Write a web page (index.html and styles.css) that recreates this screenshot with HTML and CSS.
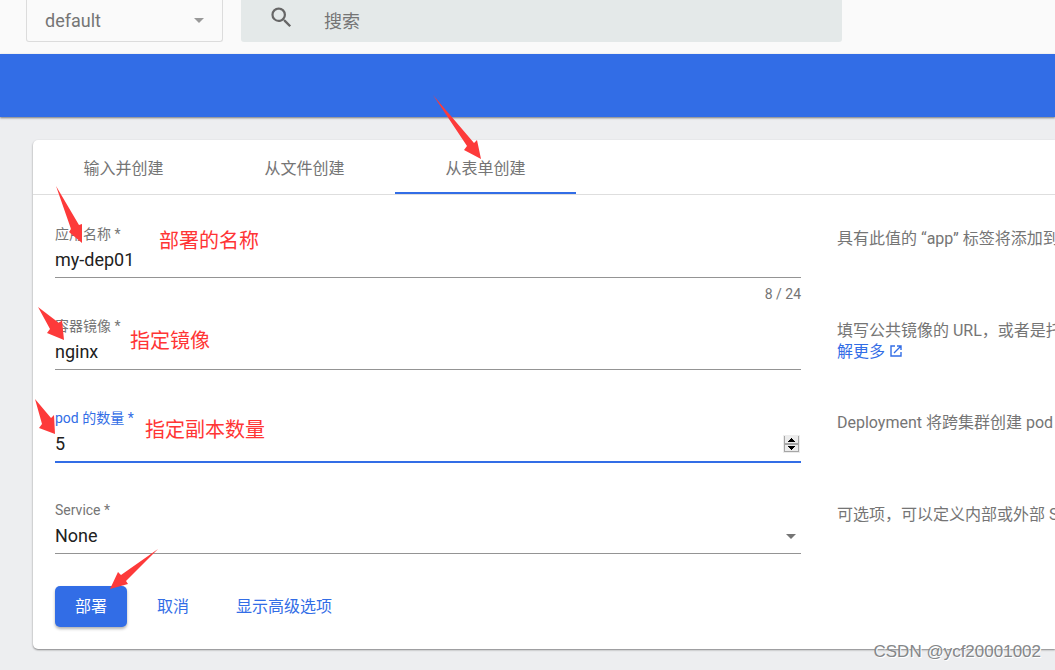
FILE: index.html
```html
<!DOCTYPE html>
<html lang="zh-CN">
<head>
<meta charset="utf-8">
<title>从表单创建</title>
<link rel="stylesheet" href="styles.css">
</head>
<body>
<header class="topbar">
  <div class="select-wrap namespace">
    <select class="namespace-select" aria-label="Namespace"><option>default</option></select>
    <svg class="caret" viewBox="0 0 10 5" aria-hidden="true"><path d="M0 0h10L5 5z"/></svg>
  </div>
  <label class="search">
    <svg class="search-icon" viewBox="0 0 24 24" aria-hidden="true"><path d="M15.5 14h-.79l-.28-.27A6.47 6.47 0 0 0 16 9.5 6.5 6.5 0 1 0 9.5 16c1.61 0 3.09-.59 4.23-1.57l.27.28v.79l5 4.99L20.49 19l-4.99-5zm-6 0C7.01 14 5 11.99 5 9.5S7.01 5 9.5 5 14 7.01 14 9.5 11.99 14 9.5 14z"/></svg>
    <input class="search-input" type="text" placeholder="搜索" aria-label="搜索">
  </label>
</header>
<div class="banner"></div>
<main class="main">
  <section class="card">
    <nav class="tabs">
      <button class="tab" type="button">输入并创建</button>
      <button class="tab" type="button">从文件创建</button>
      <button class="tab tab-active" type="button">从表单创建</button>
    </nav>
    <form class="form">
      <div class="row">
        <div class="field">
          <label class="label" for="app-name">应用名称 *</label>
          <input class="control" id="app-name" type="text" value="my-dep01">
          <span class="hint">8 / 24</span>
        </div>
        <p class="help">具有此值的 “app” 标签将添加到</p>
      </div>
      <div class="row">
        <div class="field">
          <label class="label" for="image">容器镜像 *</label>
          <input class="control" id="image" type="text" value="nginx">
        </div>
        <p class="help">填写公共镜像的 URL，或者是托<br><a class="link" href="#">解更多 <svg class="open-icon" viewBox="0 0 12 12" aria-hidden="true"><path d="M5 1H1v10h10V7M7 1h4v4M11 1L4 8"/></svg></a></p>
      </div>
      <div class="row">
        <div class="field field-focused">
          <label class="label" for="pods">pod 的数量 *</label>
          <div class="number-wrap">
            <input class="control" id="pods" type="number" value="5">
            <svg class="spinner" viewBox="0 0 17 18" aria-hidden="true"><path fill="#ececec" d="M0 0h17v18H0z"/><path fill="#a6a6a6" d="M1 1h1v16H1zM15 1h1v16h-1zM1 8h15v2H1zM1 16h15v1H1z"/><path fill="#000" d="M8 3h1v1h1v1h1v1h1v1H5V6h1V5h1V4h1zM5 11h7v1h-1v1h-1v1H9v1H8v-1H7v-1H6v-1H5z"/></svg>
          </div>
        </div>
        <p class="help">Deployment 将跨集群创建 pod</p>
      </div>
      <div class="row row-last">
        <div class="field">
          <label class="label" for="service">Service *</label>
          <div class="select-wrap">
            <select class="control" id="service"><option>None</option></select>
            <svg class="caret caret-dark" viewBox="0 0 10 5" aria-hidden="true"><path d="M0 0h10L5 5z"/></svg>
          </div>
        </div>
        <p class="help">可选项，可以定义内部或外部 S</p>
      </div>
      <div class="actions">
        <button class="button button-primary" type="submit">部署</button>
        <button class="button" type="button">取消</button>
        <button class="button" type="button">显示高级选项</button>
      </div>
    </form>
  </section>
</main>
<svg class="arrows" width="600" height="600" viewBox="0 0 600 600" aria-hidden="true">
  <path d="M433 95L474 143L477 140L481 159L464 150L467 146Z"/>
  <path d="M56 186L79 225L82 224L82 243L69 232L71 229Z"/>
  <path d="M38 307L59 323L62 320L64 340L47 333L50 329Z"/>
  <path d="M35 399L51 418L54 415L55 434L39 428L42 424Z"/>
  <path d="M158 549L126 581L128 584L110 589L118 572L121 575Z"/>
</svg>
<span class="note note-name">部署的名称</span>
<span class="note note-image">指定镜像</span>
<span class="note note-pods">指定副本数量</span>
<span class="watermark">CSDN @ycf20001002</span>
</body>
</html>
```
FILE: styles.css
```css
* { box-sizing: border-box; }
body {
  margin: 0;
  position: relative;
  min-height: 100vh;
  overflow-x: hidden;
  background: #edeef0;
  color: #212121;
  font-family: Roboto, "Noto Sans CJK SC", sans-serif;
  font-size: 16px;
}
button, input, select { font: inherit; color: inherit; outline: 0; }
button { border: 0; background: none; cursor: pointer; }
svg { display: block; }

.topbar {
  display: flex;
  gap: 18px;
  height: 54px;
  padding: 0 213px 12px 26px;
  background: #fafafa;
  font-size: 18px;
}
.select-wrap, .number-wrap { position: relative; }
.namespace { flex: 0 0 197px; }
.namespace-select {
  appearance: none;
  width: 100%;
  height: 42px;
  padding: 0 18px;
  border: 1px solid #dcdcdc;
  border-top: 0;
  border-radius: 0 0 3px 3px;
  background: none;
  color: #757575;
}
.caret {
  position: absolute;
  right: 19px;
  top: 18px;
  width: 10px;
  height: 5px;
  fill: #999;
  pointer-events: none;
}
.caret-dark { right: 5px; top: 15px; fill: #757575; }
.search {
  flex: 1;
  display: flex;
  gap: 29px;
  padding-left: 27px;
  border-radius: 0 0 3px 3px;
  background: #e4e9e9;
}
.search-icon { width: 27px; height: 27px; margin-top: 4px; fill: #666; }
.search-input { flex: 1; height: 42px; padding: 0; border: 0; background: none; }
.search-input::placeholder { color: #757575; opacity: 1; }

.banner {
  position: relative;
  height: 63px;
  background: #326de6;
  box-shadow: 0 1px 2px rgba(0, 0, 0, .5);
}
.main { padding: 23px 0 20px 33px; }
.card {
  border-radius: 5px 0 0 5px;
  background: #fff;
  box-shadow: 0 1px 2px rgba(0, 0, 0, .45);
}
.tabs { display: flex; height: 55px; border-bottom: 1px solid #dedede; }
.tab {
  width: 181px;
  padding: 2px 0 0;
  border-bottom: 2px solid transparent;
  color: #757575;
}
.tab-active { border-bottom-color: #326de6; }

.form { padding: 30px 0 22px 22px; }
.row {
  display: grid;
  grid-template-columns: minmax(0, 1fr) 218px;
  column-gap: 36px;
  min-height: 92px;
}
.row-last { min-height: 85px; }
.label { display: block; height: 18px; color: #757575; font-size: 14px; line-height: 18px; }
.control {
  appearance: none;
  display: block;
  width: 100%;
  height: 35px;
  padding: 0 0 2px;
  border: 0;
  border-bottom: 1px solid #949494;
  border-radius: 0;
  background: none;
  font-size: 18px;
}
.control[type="number"] { appearance: textfield; }
.control::-webkit-inner-spin-button { display: none; }
.field-focused .label { color: #326de6; }
.field-focused .control { height: 36px; border-bottom: 2px solid #326de6; }
.hint { display: block; margin-top: 8px; color: #757575; font-size: 14px; line-height: 16px; text-align: right; }
.spinner { position: absolute; right: 1px; top: 8px; width: 17px; height: 18px; }
.help {
  margin: 0;
  padding-top: 3px;
  color: #757575;
  line-height: 21px;
  white-space: nowrap;
}
.link { color: #326de6; text-decoration: none; }
.open-icon { display: inline-block; width: 12px; height: 12px; margin-left: 1px; fill: none; stroke: currentColor; stroke-width: 1.4; }
.actions { display: flex; gap: 7px; }
.button { height: 41px; padding: 0 20px 3px; border-radius: 5px; color: #326de6; }
.button-primary { margin-right: 3px; background: #326de6; color: #fff; box-shadow: 0 2px 3px rgba(0, 0, 0, .3); }

.arrows { position: absolute; left: 0; top: 0; fill: #fd3a3a; pointer-events: none; }
.note { position: absolute; color: #ff3535; font-size: 20px; line-height: 28px; }
.note-name { left: 159px; top: 227px; }
.note-image { left: 130px; top: 327px; }
.note-pods { left: 145px; top: 416px; }
.watermark {
  position: absolute;
  right: 14px;
  top: 642px;
  color: #858789;
  font-family: "Liberation Sans", sans-serif;
  font-size: 17px;
  line-height: 20px;
  text-shadow: 1px 1px 0 #fff;
}
```
